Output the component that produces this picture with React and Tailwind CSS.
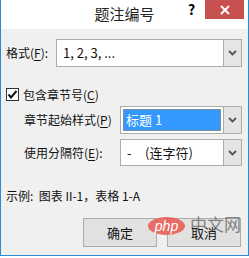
import React from "react";

const cjk = { fontFamily: '"Noto Sans CJK SC", "Noto Sans", sans-serif' };

function Chevron() {
  return (
    <svg width="9" height="6" viewBox="0 0 9 6">
      <polyline points="1,1 4.5,4.5 8,1" fill="none" stroke="#555" strokeWidth="1.8" />
    </svg>
  );
}

function Combo({ width, height = 28, children, selected }) {
  return (
    <div
      className="flex items-stretch border border-[#acacac] bg-white"
      style={{ width, height }}
    >
      <div className="flex-1 flex items-center p-[2px]">
        {selected ? (
          <div className="w-full h-full flex items-center bg-[#3399ff] border border-dotted border-[#c08040] pl-[2px] text-white text-[13px]">
            {children}
          </div>
        ) : (
          <div className="pl-[4px] text-[13px] text-[#111]">{children}</div>
        )}
      </div>
      <div className="w-[18px] my-[0px] bg-[#e5e5e5] border-l border-[#acacac] flex items-center justify-center">
        <Chevron />
      </div>
    </div>
  );
}

function Key({ k }) {
  return (
    <span>
      (<span className="underline underline-offset-2">{k}</span>)
    </span>
  );
}

export default function App() {
  return (
    <div
      className="relative w-[249px] h-[258px] bg-white text-[12px] text-[#111] leading-[16px]"
      style={cjk}
    >
      <div className="w-[249px] h-[256px] bg-[#f0f0f0] border-x border-b border-[#2a8ad4] flex flex-col">
        {/* title bar */}
        <div className="h-[29px] bg-white flex items-start relative">
          <div className="absolute left-0 right-0 top-[5px] text-center text-[15px] leading-[18px] text-[#222]">
            题注编号
          </div>
          <div className="ml-auto flex items-start">
            <div className="w-[17px] text-[14px] font-bold leading-[18px] text-black mt-[0px]">?</div>
            <div className="w-[39px] h-[19px] bg-[#c75050] flex items-center justify-center mr-[4px]">
              <svg width="10" height="10" viewBox="0 0 10 10">
                <path d="M1 1 L9 9 M9 1 L1 9" stroke="white" strokeWidth="1.8" />
              </svg>
            </div>
          </div>
        </div>

        {/* body */}
        <div className="flex flex-col pl-[5px] pr-[6px]">
          <div className="mt-[10px] flex items-center justify-between h-[28px]">
            <span>
              格式<Key k="F" />:
            </span>
            <Combo width={186}>1, 2, 3, ...</Combo>
          </div>

          <div className="mt-[21px] flex items-center h-[13px]">
            <div className="w-[13px] h-[13px] border border-[#333] bg-white flex items-center justify-center">
              <svg width="11" height="11" viewBox="0 0 11 11">
                <polyline points="1.5,5.5 4,8.5 9.5,2" fill="none" stroke="#111" strokeWidth="2" />
              </svg>
            </div>
            <span className="ml-[4px]">
              包含章节号<Key k="C" />
            </span>
          </div>

          <div className="mt-[5px] flex items-center justify-between h-[28px] pl-[18px]">
            <span>
              章节起始样式<Key k="P" />
            </span>
            <Combo width={122} selected>
              标题 1
            </Combo>
          </div>

          <div className="mt-[5px] flex items-center justify-between h-[27px] pl-[18px]">
            <span>
              使用分隔符<Key k="E" />:
            </span>
            <Combo width={122} height={27}>
              <span className="inline-block w-[16px]">-</span>
              <span className="ml-[2px]">(连字符)</span>
            </Combo>
          </div>

          <div className="mt-[22px] text-[12px]">示例:&nbsp; 图表 II-1，表格 1-A</div>

          <div className="mt-[14px] flex justify-end gap-[10px] pr-[1px]">
            <button className="w-[74px] h-[29px] bg-[#e1e1e1] border border-[#adadad] text-[13px] text-[#111]">
              确定
            </button>
            <button className="w-[74px] h-[29px] bg-[#e1e1e1] border border-[#adadad] text-[13px] text-[#111]">
              取消
            </button>
          </div>
        </div>
      </div>

      {/* watermark */}
      <div className="absolute left-[148px] top-[217px] w-[37px] h-[18px] rounded-[50%] bg-[#e8574d]/85 flex items-center justify-center">
        <span
          className="text-white text-[14px] italic leading-[14px]"
          style={{ fontFamily: '"Liberation Sans", sans-serif' }}
        >
          php
        </span>
      </div>
      <div className="absolute left-[190px] top-[214px] text-[17px] leading-[20px] text-[#555]/70">
        中文网
      </div>
    </div>
  );
}
